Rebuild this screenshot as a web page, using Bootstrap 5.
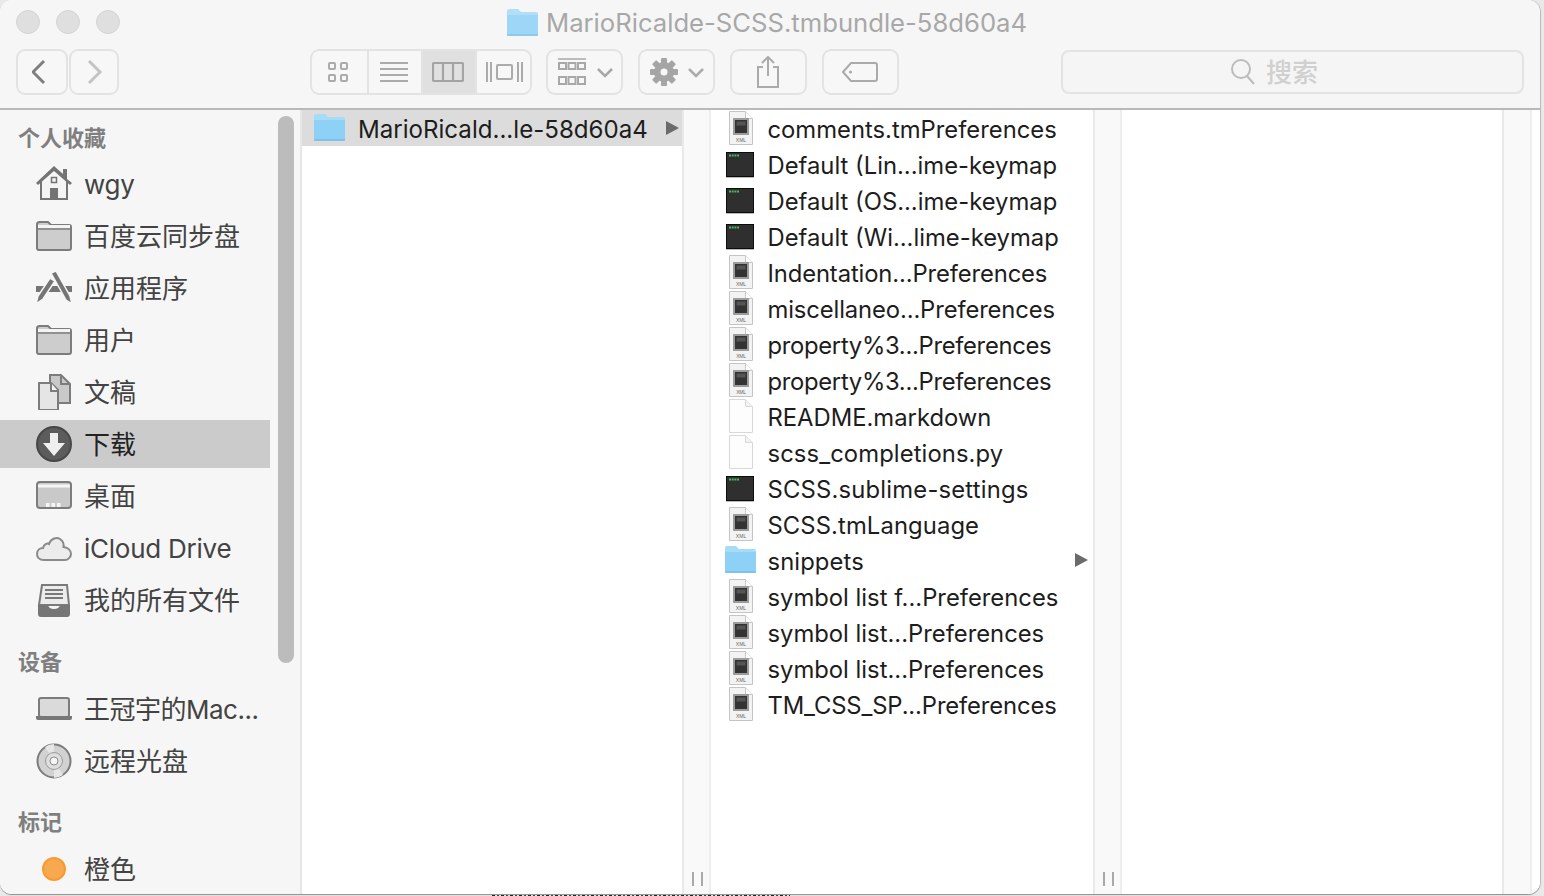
<!DOCTYPE html>
<html lang="zh">
<head>
<meta charset="utf-8">
<title>Finder</title>
<link href="https://cdn.jsdelivr.net/npm/bootstrap@5.3.0/dist/css/bootstrap.min.css" rel="stylesheet">
<style>
html,body{height:100%;margin:0;overflow:hidden;background:#e9e9e9;}
body{font-family:Inter,"Noto Sans CJK SC",sans-serif;}
.win{width:1540px;height:894px;background:#fff;border-radius:12px;overflow:hidden;box-shadow:0 1px 1px #8d8d8d,1px 0 1px #bdbdbd;}
.behind{margin:1px 0 0 492px;width:298px;height:1px;background:repeating-linear-gradient(90deg,#222 0 3px,transparent 3px 5px,#444 5px 7px,transparent 7px 9px);}
.tbar{height:110px;background:#f6f6f6;border-bottom:2px solid #b9b9b9;flex:none;}
.tl-row{height:49px;padding:0 0 5px 16px;gap:16px;position:relative;}
.dot{width:24px;height:24px;border-radius:50%;background:#dfdfdf;border:1px solid #d4d4d4;}
.ttl{position:absolute;left:506px;top:6px;height:34px;gap:7px;color:#a8a8a8;font-size:25.65px;white-space:nowrap;}
.ttl svg{opacity:.85;}
.tools{padding-left:16px;height:46px;}
.tb{height:46px;border:2px solid #e3e3e3;border-radius:9px;background:#f7f7f7;padding:0;display:flex;align-items:center;justify-content:center;}
.w-back{width:52px;margin-right:1px;}.w-fwd{width:50px;margin-right:191px;}
.seg{height:46px;width:222px;margin-right:14px;border:2px solid #e3e3e3;border-radius:9px;overflow:hidden;background:#f7f7f7;}
.seg>div{display:flex;align-items:center;justify-content:center;height:100%;border-right:2px solid #e3e3e3;}
.seg>div:last-child{border-right:0;}
.s1{width:57px}.s1 svg{margin-right:4px}.s2{width:54px}.s2 svg{margin-right:2px}.s3{width:54px;background:#e0e0e0}.s3 svg{margin-right:2px}.s4{flex:1}
.w-77{width:77px;margin-right:15px;}.w-tag{margin-right:162px;}
.nudge{margin-left:2px;}
.back2{margin-right:2px;}
.srch{width:463px;height:44px;margin-top:1px;padding-right:36px;border:2px solid #e3e3e3;border-radius:8px;background:#f5f5f5;gap:11px;color:#d0d0d0;font-size:26px;}
.srch span{font-weight:500;}
.main{flex:1;min-height:0;}
.side{width:302px;flex:none;background:#f6f6f6;border-right:2px solid #e6e6e6;position:relative;overflow:hidden;}
.thumb{position:absolute;left:278px;top:6px;width:16px;height:547px;background:#bcbcbc;border-radius:8px;}
.shead{height:48px;padding:0 0 4px 18px;font-size:22px;line-height:32px;font-weight:700;color:#7f7f7f;display:flex;align-items:flex-end;}
.shead.gap{height:57px;padding-bottom:5px;}
.shead.gap2{height:56px;padding-bottom:5px;}
.sitem{height:52px;width:270px;padding-left:36px;gap:12px;font-size:26px;color:#434343;display:flex;align-items:center;white-space:nowrap;}
.sitem.on{height:48px;margin:2px 0;background:#cbcbcb;color:#222;}
.sitem svg{width:36px;height:36px;flex:none;}
.tight{letter-spacing:-.25px;}
.tighter{letter-spacing:-.5px;}
.fcol{width:380px;flex:none;background:#fff;overflow:hidden;}
.fcol.mid{width:382px;}
.rw{height:36px;padding-top:4px;display:flex;align-items:center;font-size:23.8px;color:#1d1d1d;position:relative;white-space:nowrap;}
.rw .ic{margin-top:-2px;}
.rw.sel{background:#dcdcdc;font-size:24.1px;padding-top:4px;}
.rw .ic{width:36px;height:36px;flex:none;margin-left:15px;margin-right:5.5px;}
.rw .ic.fo{margin-left:13px;margin-right:7.5px;}
.rw.sel .ic.fo{margin-left:11px;margin-right:9px;}
.ls-a{letter-spacing:-.3px;}.ls-b{letter-spacing:-.12px;}.ls-c{letter-spacing:.2px;}.ls-d{letter-spacing:.1px;}
.arr{position:absolute;width:0;height:0;border-left:13px solid #6b6b6b;border-top:7px solid transparent;border-bottom:7px solid transparent;top:11px;left:364px;}
.strip{width:29px;flex:none;background:#f9f9f9;border-left:2px solid #e9e9e9;border-right:2px solid #eeeeee;position:relative;}
.strip.last{width:30px;}
.grip{position:absolute;left:8px;bottom:8px;width:10.5px;height:14px;border-left:2.5px solid #a9a9a9;border-right:2.5px solid #a9a9a9;}
.tail{flex:1;background:#fff;}
</style>
</head>
<body>
<svg width="0" height="0" style="display:none">
<symbol id="i-folder" viewBox="0 0 36 36"><path d="M1 8V6.500Q1 4 3.500 4H12l3 3h18q2 0 2 2v21q0 2-2 2H3q-2 0-2-2z" fill="#cdcdcd" stroke="#7c7c7c" stroke-width="2"/><path d="M2 11h32" stroke="#7c7c7c" stroke-width="1.500"/><path d="M2 8.500h32" stroke="#f4f4f4" stroke-width="3"/></symbol>
<symbol id="i-home" viewBox="0 0 36 36"><path d="M5 15v18h26V15" fill="#f4f4f4" stroke="#747474" stroke-width="2"/><path d="M0 17 18 0l9 8V3h4v10l5 4-2 2L18 5 2 19z" fill="#747474"/><path d="M14 22h8v11h-8z" fill="#747474"/><rect x="15.500" y="11.500" width="5" height="5" fill="#f4f4f4" stroke="#747474" stroke-width="1.500"/></symbol>
<symbol id="i-apps" viewBox="0 0 36 36"><path d="M0 16h36v6H0z" fill="#757575"/><path d="M0 34l2-8L14 8l5 3L7 29z" fill="#757575" stroke="#f6f6f6" stroke-width="1.500"/><path d="M15 3l5-2 14 25 2 8-6-4z" fill="#757575" stroke="#f6f6f6" stroke-width="1.500"/></symbol>
<symbol id="i-docs" viewBox="0 0 36 36"><path d="M14 1h11l9 9v19h-20z" fill="#c9c9c9" stroke="#7c7c7c" stroke-width="2"/><path d="M25 1v9h9" fill="none" stroke="#7c7c7c" stroke-width="2"/><path d="M3 9h12l7 7v20H3z" fill="#e5e5e5" stroke="#7c7c7c" stroke-width="2"/><path d="M15 9v8h7" fill="#f4f4f4" stroke="#7c7c7c" stroke-width="2"/></symbol>
<symbol id="i-down" viewBox="0 0 36 36"><circle cx="18" cy="18" r="17" fill="#5c5c5c" stroke="#474747" stroke-width="2"/><path d="M14 7h8v10h7L18 30 7 17h7z" fill="#efefef"/></symbol>
<symbol id="i-desk" viewBox="0 0 36 36"><rect x="1" y="4" width="34" height="26" rx="3" fill="#c9c9c9" stroke="#7c7c7c" stroke-width="2"/><path d="M2 8h32" stroke="#f5f5f5" stroke-width="3"/><path d="M10 25h3.500v4H10zM15.500 25H19v4h-3.500zM21 25h3.500v4H21z" fill="#f5f5f5"/></symbol>
<symbol id="i-cloud" viewBox="0 0 36 36"><path d="M8 30C3 30 1 27 1 24c0-4 3-6 6-6 1-4 4-5 6-4 2-6 8-7 11-5 3 2 4 5 3.500 8 4 .5 7.500 3 7.500 7 0 3-3 6-6 6z" fill="#ececec" stroke="#8a8a8a" stroke-width="2"/></symbol>
<symbol id="i-inbox" viewBox="0 0 36 36"><path d="M6 3h25l2 20H3z" fill="#ececec" stroke="#7a7a7a" stroke-width="2"/><path d="M9 8h18M9 12h18M9 16h18" stroke="#7a7a7a" stroke-width="1.800"/><path d="M2 23h10q1 4 6 4t6-4h10v9q0 3-3 3H5q-3 0-3-3z" fill="#767676"/></symbol>
<symbol id="i-laptop" viewBox="0 0 36 36"><rect x="3" y="7" width="30" height="19" rx="2" fill="#dadada" stroke="#7c7c7c" stroke-width="2"/><path d="M0 25h36v2q0 2-2 2H2q-2 0-2-2z" fill="#777"/></symbol>
<symbol id="i-disc" viewBox="0 0 36 36"><circle cx="18" cy="18" r="16.500" fill="#d2d2d2" stroke="#7c7c7c" stroke-width="2"/><path d="M18 18 9 4a17 17 0 0 1 9-3zM18 18l9 14a17 17 0 0 1-9 3z" fill="#e6e6e6"/><circle cx="18" cy="18" r="8.500" fill="#dedede" stroke="#9b9b9b" stroke-width="1"/><circle cx="18" cy="18" r="4" fill="#f6f6f6" stroke="#8b8b8b" stroke-width="1"/></symbol>
<symbol id="i-dotc" viewBox="0 0 36 36"><circle cx="18" cy="18" r="11" fill="#f7a94f" stroke="#f89a2e" stroke-width="2"/></symbol>
<symbol id="f-xml" viewBox="0 0 36 36"><path d="M3.500 .5h16l7 7v26h-23z" fill="#f3f3f3" stroke="#c4c4c4"/><path d="M19.500 .5v7h7" fill="#fff" stroke="#c8c8c8"/><rect x="7" y="7" width="16" height="17" fill="#9c9c9c"/><rect x="9" y="9" width="12" height="13" fill="#333"/><rect x="10.500" y="10.500" width="9" height="4" fill="#555"/><text x="15" y="31" font-size="5" text-anchor="middle" fill="#666" font-family="Liberation Sans,sans-serif">XML</text></symbol>
<symbol id="f-term" viewBox="0 0 36 36"><rect x=".5" y="5.500" width="27" height="24" fill="#2f2f2f" stroke="#0c0c0c" stroke-width="1"/><path d="M3 8.500h10" stroke="#45b860" stroke-width="2" stroke-dasharray="2 .7"/><path d="M0 30.500h28" stroke="#bbb" stroke-width="1"/></symbol>
<symbol id="f-blank" viewBox="0 0 36 36"><path d="M3.500 .5h16l7 7v26h-23z" fill="#fdfdfd" stroke="#d8d8d8"/><path d="M19.500 .5v7h7" fill="#f2f2f2" stroke="#d8d8d8"/></symbol>
<symbol id="f-folder" viewBox="0 0 36 36"><path d="M1 5q0-2 2-2h9l3 3h15q2 0 2 2v20q0 2-2 2H3q-2 0-2-2z" fill="#a6dcf8"/><path d="M1 9h31v19q0 2-2 2H3q-2 0-2-2z" fill="#8ed1f6"/><path d="M1 29h31" stroke="#6fb2dc" stroke-width="1"/></symbol>
</svg>

<div class="win d-flex flex-column">
  <div class="tbar d-flex flex-column">
    <div class="tl-row d-flex align-items-center">
      <div class="dot"></div><div class="dot"></div><div class="dot"></div>
      <div class="ttl d-flex align-items-center">
        <svg width="33" height="30" viewBox="0 0 33 30"><use href="#f-folder" width="36" height="36" y="-2"/></svg>
        <span>MarioRicalde-SCSS.tmbundle-58d60a4</span>
      </div>
    </div>
    <div class="tools d-flex">
      <button class="tb w-back" type="button" aria-label="back"><svg width="20" height="26" viewBox="0 0 20 26"><path d="M12 2 1 13l11 11" fill="none" stroke="#7f7f7f" stroke-width="3"/></svg></button>
      <button class="tb w-fwd" type="button" aria-label="forward"><svg width="20" height="26" viewBox="0 0 20 26"><path d="M5 2l11 11L5 24" fill="none" stroke="#c4c4c4" stroke-width="3"/></svg></button>
      <div class="seg d-flex">
        <div class="s1"><svg width="22" height="22" viewBox="0 0 22 22" fill="none" stroke="#ababab" stroke-width="2"><rect x="2" y="2" width="6" height="6" rx="1"/><rect x="14" y="2" width="6" height="6" rx="1"/><rect x="2" y="14" width="6" height="6" rx="1"/><rect x="14" y="14" width="6" height="6" rx="1"/></svg></div>
        <div class="s2"><svg width="28" height="22" viewBox="0 0 28 22" stroke="#ababab" stroke-width="2"><path d="M0 2h28M0 8h28M0 14h28M0 20h28"/></svg></div>
        <div class="s3"><svg width="32" height="20" viewBox="0 0 32 20" fill="none" stroke="#a4a4a4" stroke-width="2.200"><rect x="1" y="1" width="30" height="18" rx="1"/><path d="M11 1v18M21 1v18"/></svg></div>
        <div class="s4"><svg width="38" height="20" viewBox="0 0 38 20" fill="none" stroke="#ababab" stroke-width="2"><path d="M2 0v20M6 0v20M33 0v20M37 0v20"/><rect x="12" y="3" width="15" height="14" rx="1"/></svg></div>
      </div>
      <button class="tb w-77" type="button" aria-label="arrange"><svg class="nudge" width="56" height="28" viewBox="0 0 56 28" fill="none" stroke="#a8a8a8"><path d="M0 1h28" stroke-width="1.500"/><path d="M1 5h7v6H1zM10.500 5h7v6h-7zM20 5h7v6h-7zM1 19h7v7H1zM10.500 19h7v7h-7zM20 19h7v7h-7z" stroke-width="2"/><path d="M40 11l7 7 7-7" stroke-width="2.500"/></svg></button>
      <button class="tb w-77" type="button" aria-label="action"><svg class="nudge" width="56" height="28" viewBox="0 0 56 28"><g fill="#a5a5a5"><rect x="11" y="0" width="6" height="28" rx="1"/><rect x="11" y="0" width="6" height="28" rx="1" transform="rotate(45 14 14)"/><rect x="11" y="0" width="6" height="28" rx="1" transform="rotate(90 14 14)"/><rect x="11" y="0" width="6" height="28" rx="1" transform="rotate(135 14 14)"/><circle cx="14" cy="14" r="10"/></g><circle cx="14" cy="14" r="3.500" fill="#f7f7f7"/><path d="M39 11l7 7 7-7" fill="none" stroke="#ababab" stroke-width="2.500"/></svg></button>
      <button class="tb w-77" type="button" aria-label="share"><svg class="back2" width="24" height="32" viewBox="0 0 24 32" fill="none" stroke="#ababab" stroke-width="2"><path d="M7 11H2v20h20V11h-5"/><path d="M12 20V1M6 7l6-6 6 6"/></svg></button>
      <button class="tb w-77 w-tag" type="button" aria-label="tag"><svg class="back2" width="36" height="20" viewBox="0 0 36 20" fill="none" stroke="#ababab" stroke-width="2"><path d="M9 1h24q2 0 2 2v14q0 2-2 2H9L1 10z"/><circle cx="8.500" cy="10" r="1.500" fill="#ababab" stroke="none"/></svg></button>
      <div class="srch d-flex align-items-center justify-content-center">
        <svg width="24" height="26" viewBox="0 0 24 26" fill="none" stroke="#bcbcbc" stroke-width="2"><circle cx="10" cy="10" r="9"/><path d="M16 17l7 8"/></svg>
        <span>搜索</span>
      </div>
    </div>
  </div>

  <div class="main d-flex">
    <div class="side">
      <div class="thumb"></div>
      <div class="shead">个人收藏</div>
      <div class="sitem tight"><svg><use href="#i-home"/></svg>wgy</div>
      <div class="sitem"><svg><use href="#i-folder"/></svg>百度云同步盘</div>
      <div class="sitem"><svg><use href="#i-apps"/></svg>应用程序</div>
      <div class="sitem"><svg><use href="#i-folder"/></svg>用户</div>
      <div class="sitem"><svg><use href="#i-docs"/></svg>文稿</div>
      <div class="sitem on"><svg><use href="#i-down"/></svg>下载</div>
      <div class="sitem"><svg><use href="#i-desk"/></svg>桌面</div>
      <div class="sitem tight"><svg><use href="#i-cloud"/></svg>iCloud Drive</div>
      <div class="sitem"><svg><use href="#i-inbox"/></svg>我的所有文件</div>
      <div class="shead gap">设备</div>
      <div class="sitem tighter"><svg><use href="#i-laptop"/></svg>王冠宇的Mac...</div>
      <div class="sitem"><svg><use href="#i-disc"/></svg>远程光盘</div>
      <div class="shead gap2">标记</div>
      <div class="sitem"><svg><use href="#i-dotc"/></svg>橙色</div>
    </div>

    <div class="fcol">
      <div class="rw sel"><svg class="ic fo"><use href="#f-folder"/></svg>MarioRicald...le-58d60a4<span class="arr"></span></div>
    </div>
    <div class="strip"><div class="grip"></div></div>

    <div class="fcol mid">
      <div class="rw"><svg class="ic"><use href="#f-xml"/></svg>comments.tmPreferences</div>
      <div class="rw"><svg class="ic"><use href="#f-term"/></svg>Default (Lin...ime-keymap</div>
      <div class="rw"><svg class="ic"><use href="#f-term"/></svg>Default (OS...ime-keymap</div>
      <div class="rw"><svg class="ic"><use href="#f-term"/></svg>Default (Wi...lime-keymap</div>
      <div class="rw ls-b"><svg class="ic"><use href="#f-xml"/></svg>Indentation...Preferences</div>
      <div class="rw ls-b"><svg class="ic"><use href="#f-xml"/></svg>miscellaneo...Preferences</div>
      <div class="rw ls-a"><svg class="ic"><use href="#f-xml"/></svg>property%3...Preferences</div>
      <div class="rw ls-a"><svg class="ic"><use href="#f-xml"/></svg>property%3...Preferences</div>
      <div class="rw"><svg class="ic"><use href="#f-blank"/></svg>README.markdown</div>
      <div class="rw ls-d"><svg class="ic"><use href="#f-blank"/></svg>scss_completions.py</div>
      <div class="rw ls-c"><svg class="ic"><use href="#f-term"/></svg>SCSS.sublime-settings</div>
      <div class="rw ls-d"><svg class="ic"><use href="#f-xml"/></svg>SCSS.tmLanguage</div>
      <div class="rw ls-d"><svg class="ic fo"><use href="#f-folder"/></svg>snippets<span class="arr"></span></div>
      <div class="rw"><svg class="ic"><use href="#f-xml"/></svg>symbol list f...Preferences</div>
      <div class="rw"><svg class="ic"><use href="#f-xml"/></svg>symbol list...Preferences</div>
      <div class="rw"><svg class="ic"><use href="#f-xml"/></svg>symbol list...Preferences</div>
      <div class="rw ls-b"><svg class="ic"><use href="#f-xml"/></svg>TM_CSS_SP...Preferences</div>
    </div>
    <div class="strip"><div class="grip"></div></div>

    <div class="fcol"></div>
    <div class="strip last"></div>
    <div class="tail"></div>
  </div>
</div>
<div class="behind"></div>
<script src="https://cdn.jsdelivr.net/npm/bootstrap@5.3.0/dist/js/bootstrap.bundle.min.js"></script>
</body>
</html>
